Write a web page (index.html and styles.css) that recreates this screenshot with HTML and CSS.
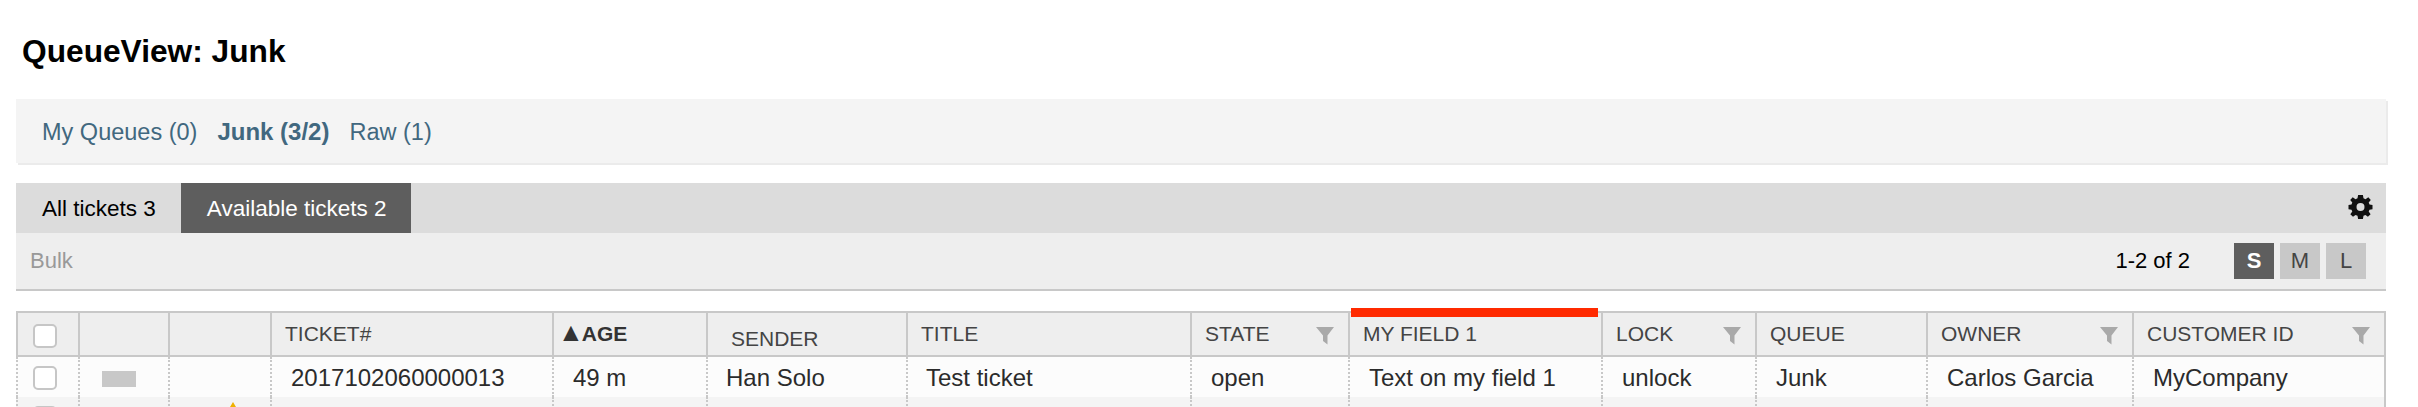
FILE: index.html
```html
<!DOCTYPE html>
<html lang="en">
<head>
<meta charset="utf-8">
<title>QueueView: Junk</title>
<link rel="stylesheet" href="styles.css">
</head>
<body>
<svg class="defs" width="0" height="0" aria-hidden="true">
  <symbol id="funnel" viewBox="0 0 18 18"><path d="M0 0H18L11.5 8.5V17.5L7 14V8.5Z"/></symbol>
</svg>
<main class="page">
  <h1 class="title">QueueView: Junk</h1>
  <nav class="queues">
    <a class="queue">My Queues (0)</a>
    <a class="queue queue-active">Junk (3/2)</a>
    <a class="queue">Raw (1)</a>
  </nav>
  <div class="tabbar">
    <a class="tab">All tickets 3</a>
    <a class="tab tab-active">Available tickets 2</a>
    <svg class="gear" viewBox="0 0 24 24" aria-hidden="true">
      <path d="M9.6 0H14.4L15 3.3 17 4.2 19.8 2.3 22.3 5.1 20.2 7.6 21 9.6 24 10V14.2L21 14.7 20.2 16.6 22.1 19.2 19.4 21.8 17 20 15 20.8 14.4 24H9.6L9 20.8 7 20 4.5 21.8 1.8 19.2 3.8 16.6 3 14.7 0 14.2V10L3 9.6 3.8 7.6 1.7 5.1 4.2 2.3 7 4.2 9 3.3ZM12 8A4 4 0 1 0 12 16 4 4 0 1 0 12 8Z" fill-rule="evenodd"/>
    </svg>
  </div>
  <div class="actions">
    <span class="bulk">Bulk</span>
    <div class="pager">
      <span class="count">1-2 of 2</span>
      <div class="sizes">
        <a class="size size-active">S</a>
        <a class="size">M</a>
        <a class="size">L</a>
      </div>
    </div>
  </div>
  <table class="tickets">
    <colgroup>
      <col class="c62"><col class="c90"><col class="c102"><col class="c282"><col class="c154"><col class="c200"><col class="c284"><col class="c158"><col class="c253"><col class="c154"><col class="c171"><col class="c206"><col class="c254">
    </colgroup>
    <thead>
      <tr>
        <th class="check"><input class="box" type="checkbox" aria-label="Select all"></th>
        <th></th>
        <th></th>
        <th><div class="hd">TICKET#</div></th>
        <th class="th-age"><div class="hd"><span><span class="arrow">▲</span>AGE</span></div></th>
        <th class="th-sender"><div class="hd">SENDER</div></th>
        <th><div class="hd">TITLE</div></th>
        <th><div class="hd">STATE<svg class="funnel"><use href="#funnel"/></svg></div></th>
        <th class="th-marked"><div class="hd">MY FIELD 1</div><span class="redbar"></span></th>
        <th><div class="hd">LOCK<svg class="funnel"><use href="#funnel"/></svg></div></th>
        <th><div class="hd">QUEUE</div></th>
        <th><div class="hd">OWNER<svg class="funnel"><use href="#funnel"/></svg></div></th>
        <th class="last"><div class="hd">CUSTOMER ID<svg class="funnel"><use href="#funnel"/></svg></div></th>
      </tr>
    </thead>
    <tbody>
      <tr class="odd">
        <td class="check"><input class="box" type="checkbox" aria-label="Select ticket"></td>
        <td><span class="bar"></span></td>
        <td></td>
        <td>2017102060000013</td>
        <td>49 m</td>
        <td class="td-sender">Han Solo</td>
        <td class="td-title">Test ticket</td>
        <td>open</td>
        <td>Text on my field 1</td>
        <td>unlock</td>
        <td>Junk</td>
        <td>Carlos Garcia</td>
        <td class="last">MyCompany</td>
      </tr>
      <tr class="even">
        <td class="check"><input class="box" type="checkbox" aria-label="Select ticket"></td>
        <td></td>
        <td class="td-warn"><svg class="warn" viewBox="0 0 24 20" aria-hidden="true"><path d="M12 0L24 20H0Z"/></svg></td>
        <td></td><td></td><td></td><td></td><td></td><td></td><td></td><td></td><td></td>
        <td class="last"></td>
      </tr>
    </tbody>
  </table>
</main>
</body>
</html>
```
FILE: styles.css
```css
html, body {
  margin: 0;
  height: 407px;
  overflow: hidden;
  background: #fff;
}
body {
  font-family: "Liberation Sans", Arial, sans-serif;
  font-size: 24px;
  color: #333;
}
.defs { display: block; height: 0; }
.page {
  box-sizing: border-box;
  height: 407px;
  overflow: hidden;
  padding: 0 32px 0 16px;
}

.title {
  margin: 0;
  padding: 33px 0 0 6px;
  height: 99px;
  box-sizing: border-box;
  font-size: 31.7px;
  line-height: 36px;
  font-weight: 700;
  color: #000;
}

.queues {
  display: flex;
  gap: 20px;
  box-sizing: border-box;
  height: 64px;
  padding: 2px 26px 0;
  align-items: center;
  background: #f4f4f4;
  box-shadow: 2px 2px 0 #ebebeb;
  font-size: 23.5px;
}
.queue { color: #41687f; white-space: nowrap; }
.queue-active { font-weight: 700; font-size: 24px; }

.tabbar {
  display: flex;
  align-items: stretch;
  height: 50px;
  margin-top: 20px;
  background: #dcdcdc;
  font-size: 22.5px;
}
.tab {
  display: flex;
  align-items: center;
  padding: 2px 25px 0 26px;
  color: #000;
  white-space: nowrap;
}
.tab-active { background: #5e5e5e; color: #fff; }
.gear {
  width: 25px;
  height: 24px;
  margin: 12px 13px 0 auto;
  fill: #111;
}

.actions {
  display: flex;
  justify-content: space-between;
  align-items: center;
  box-sizing: border-box;
  height: 58px;
  padding: 0 20px 0 14px;
  background: #eee;
  border-bottom: 2px solid #c8c8c8;
  font-size: 22px;
}
.bulk { color: #999; }
.pager { display: flex; align-items: center; gap: 44px; }
.count { color: #000; }
.sizes { display: flex; gap: 6px; }
.size {
  display: flex;
  align-items: center;
  justify-content: center;
  width: 40px;
  height: 36px;
  background: #c8c8c8;
  color: #444;
  font-size: 22px;
}
.size-active { background: #5e5e5e; color: #fff; font-weight: 700; }

.tickets {
  width: 2370px;
  margin-top: 20px;
  border-collapse: separate;
  border-spacing: 0;
  table-layout: fixed;
}
.c62 { width: 62px; }
.c90 { width: 90px; }
.c102 { width: 102px; }
.c282 { width: 282px; }
.c154 { width: 154px; }
.c200 { width: 200px; }
.c284 { width: 284px; }
.c158 { width: 158px; }
.c253 { width: 253px; }
.c171 { width: 171px; }
.c206 { width: 206px; }
.c254 { width: 254px; }

.tickets th {
  box-sizing: border-box;
  height: 46px;
  padding: 8px 14px 0 13px;
  vertical-align: top;
  text-align: left;
  font-size: 21px;
  line-height: 26px;
  font-weight: 400;
  color: #444;
  background: #eee;
  border-top: 2px solid #c8c8c8;
  border-bottom: 2px solid #c8c8c8;
  border-left: 2px solid #c8c8c8;
}
.tickets th.last, .tickets td.last { border-right: 2px solid #c8c8c8; }
.hd {
  display: flex;
  justify-content: space-between;
  align-items: flex-start;
  white-space: nowrap;
}
.tickets .th-age { font-weight: 700; color: #333; padding-left: 4px; }
.arrow { font-size: 26px; line-height: 20px; letter-spacing: -2px; }
.tickets .th-sender { padding-left: 23px; padding-top: 13px; }
.th-marked { position: relative; }
.redbar {
  position: absolute;
  left: 1px;
  top: -5px;
  width: 247px;
  height: 9px;
  background: #ff2a00;
}
.funnel {
  flex: none;
  width: 18px;
  height: 18px;
  margin-top: 6px;
  fill: #a9a9a9;
}

.tickets td {
  box-sizing: border-box;
  height: 40px;
  padding: 2px 0 0 19px;
  text-align: left;
  vertical-align: middle;
  white-space: nowrap;
  border-left: 2px dotted #c8c8c8;
  color: #2b2b2b;
}
.odd td { background: #fcfcfc; }
.even td { background: #f4f4f4; vertical-align: top; }
.tickets .td-sender, .tickets .td-title { padding-left: 18px; }

.tickets th.check, .tickets td.check { padding: 0 0 0 15px; }
.tickets th.check { padding-top: 11px; }
.tickets td.check { vertical-align: top; padding-top: 9px; }
.box {
  display: block;
  appearance: none;
  -webkit-appearance: none;
  box-sizing: border-box;
  width: 24px;
  height: 24px;
  margin: 0;
  background: #fff;
  border: 2px solid #c6c6c6;
  border-radius: 5px;
}
.bar {
  display: block;
  width: 34px;
  height: 16px;
  margin: 2px 0 0 3px;
  background: #c8c8c8;
}
.tickets .td-warn { padding: 5px 0 0 51px; }
.warn { display: block; width: 24px; height: 20px; fill: #efb000; }
```
